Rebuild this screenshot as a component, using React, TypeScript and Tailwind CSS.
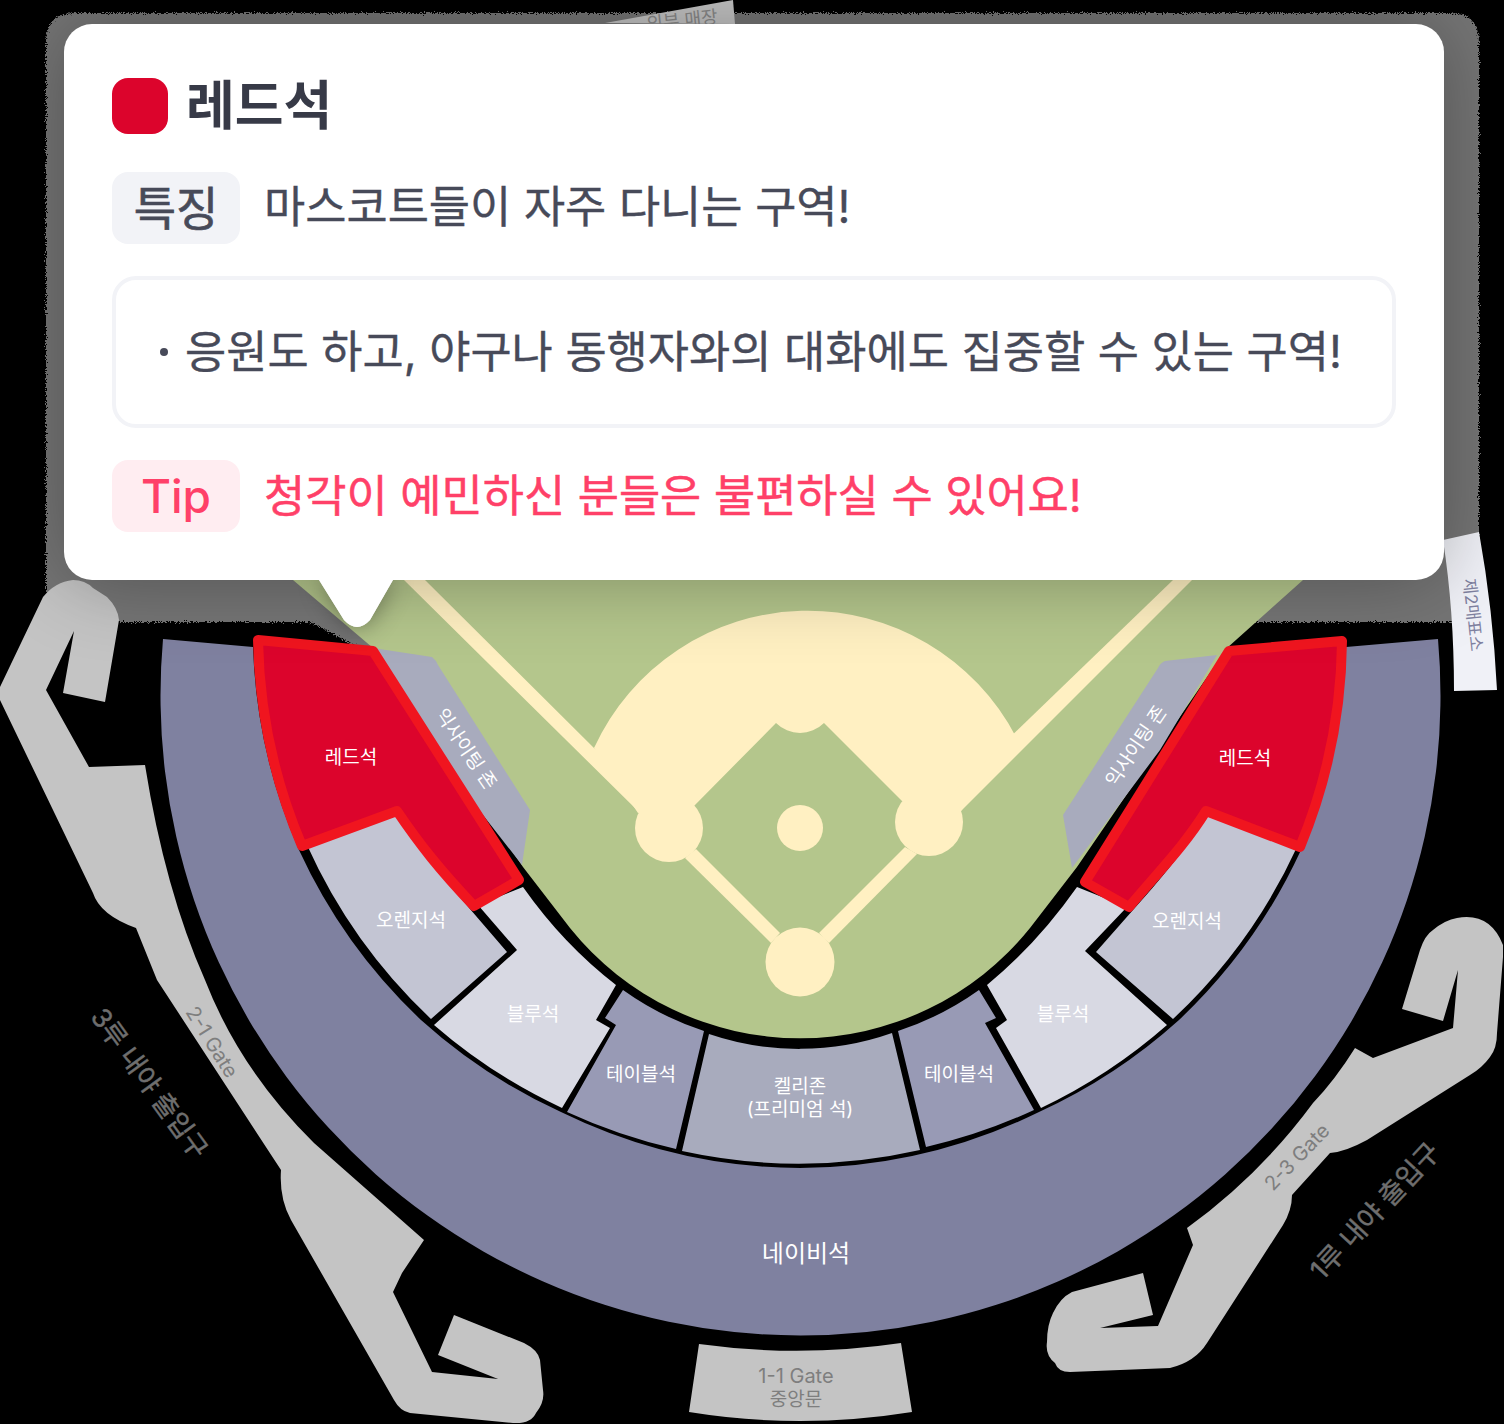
import React from 'react';

const FONT = "font-['Inter','Noto_Sans_CJK_KR',sans-serif]";

const GRAY = '#c4c4c4';
const NAVY = '#7f81a0';
const ORANGE = '#c3c5d3';
const BLUE = '#d8d9e3';
const TABLE = '#989ab5';
const ZONE = '#a8abbd';
const RED = '#dc042c';
const RED_LINE = '#f0151f';
const GRASS = '#b4c68c';
const DIRT = '#fff0c2';

const TAIL = 'M0 0L25 40Q38 54 51 40L74 0Z';

type LabelProps = {
  x: number;
  y: number;
  size: number;
  rotate?: number;
  className?: string;
  children: React.ReactNode;
};

const Label: React.FC<LabelProps> = ({ x, y, size, rotate = 0, className = 'fill-white', children }) => (
  <text
    x={x}
    y={y}
    fontSize={size}
    textAnchor="middle"
    dominantBaseline="central"
    transform={rotate ? `rotate(${rotate} ${x} ${y})` : undefined}
    className={className}
  >
    {children}
  </text>
);

const StadiumMap: React.FC = () => (
  <svg className="absolute inset-0" width={1504} height={1424} viewBox="0 0 1504 1424">
    <defs>
      <filter id="grain" x="-2%" y="-2%" width="104%" height="104%">
        <feTurbulence type="fractalNoise" baseFrequency="0.9" numOctaves="2" result="n" />
        <feDisplacementMap in="SourceGraphic" in2="n" scale="7" xChannelSelector="R" yChannelSelector="G" />
      </filter>
    </defs>

    {/* shadow of the tooltip as it flattens on the page */}
    <path
      d="M75 13H1450Q1479 13 1479 42V622H395L373 655L310 622H46V42Q46 13 75 13Z"
      fill="#747474"
      filter="url(#grain)"
    />

    {/* gates */}
    <path
      fill={GRAY}
      d="M73 580Q55 582 43 597L0 687V700L93 893Q100 915 136 928L157 980L281 1170Q279 1198 291 1220L394 1400Q400 1411 410 1413L513 1423Q531 1424 536 1413Q545 1402 543 1390L540 1360Q538 1350 524 1343L454 1315L438 1355L498 1379L432 1372L393 1292L402 1273L424 1240L314 1143Q240 1070 205 980Q165 890 145 765L89 767L46 690L74 631L63 693L105 702L119 620Q118 608 107 597L93 588Q85 580 73 580Z"
    />
    <path
      fill={GRAY}
      d="M1457 918Q1490 912 1503 945V957L1497 1033Q1497 1048 1490 1057Q1482 1068 1470 1075L1367 1140Q1345 1152 1330 1153L1292 1195Q1292 1210 1283 1225L1207 1343Q1195 1362 1170 1368L1070 1372Q1058 1372 1055 1363Q1045 1355 1047 1342Q1047 1325 1053 1313Q1060 1298 1072 1292L1143 1273L1153 1315L1100 1328L1158 1326L1193 1245L1187 1228Q1260 1175 1313 1103Q1335 1080 1355 1048L1373 1058L1453 1028L1458 970L1443 1021L1402 1009L1420 950Q1425 935 1433 930Q1445 920 1457 918Z"
    />
    <path fill={GRAY} d="M699 1344Q800 1358 901 1343L912 1412Q800 1430 689 1412Z" />
    <path fill={GRAY} d="M605 23L733 0L735 24Z" />
    <path fill="#f0f1f7" d="M1443 540L1479 532Q1493 610 1497 690L1454 691Q1454 610 1443 540Z" />

    {/* field */}
    <path
      fill={GRASS}
      d="M293 580L373 648L523 867L570 928A295 295 0 0 0 1030 928L1077 867L1227 648L1303 580Z"
    />
    <path
      fill={DIRT}
      d="M594 748A235 235 0 0 1 1016 737L961 811L902 801L824 723A34 34 0 0 1 776 723L694 806L638 813Z"
    />
    <path fill={DIRT} d="M404 580H425L594 748L660 813L640 813Z" />
    <path fill={DIRT} d="M1173 580H1192L961 811L945 800Z" />
    <path fill={DIRT} d="M685 858L771 943L780 933L696 849Z" />
    <path fill={DIRT} d="M905 847L819 933L829 943L917 854Z" />
    <circle cx={669} cy={828} r={34} fill={DIRT} />
    <circle cx={929} cy={822} r={34} fill={DIRT} />
    <circle cx={800} cy={828} r={23} fill={DIRT} />
    <circle cx={800} cy={962} r={34.5} fill={DIRT} />

    {/* stands */}
    <path
      fill={NAVY}
      d="M163 639A640 640 0 1 0 1438 639L1346 647A550 550 0 0 1 1301 850A550 550 0 0 1 1179 1020A550 550 0 0 1 1039 1112A550 550 0 0 1 800 1168A550 550 0 0 1 561 1112A550 550 0 0 1 421 1020A550 550 0 0 1 299 850A550 550 0 0 1 253 647Z"
    />
    <path fill={ZONE} d="M373 648L432 657Q436 660 438 665L530 810L522 865L440 760Z" />
    <path fill={ZONE} d="M1217 655L1165 661Q1160 663 1158 668L1063 815L1072 868L1160 750Z" />

    <path fill={ORANGE} d="M307 845L396 815C420 850 445 880 470 909L507 952L431 1019A548 548 0 0 1 307 845Z" />
    <path fill={ORANGE} d="M1297 847L1207 816C1185 850 1160 880 1133 910L1096 952L1173 1019A548 548 0 0 0 1297 847Z" />
    <path fill={BLUE} d="M478 905L523 887Q563 944 616 985L596 1020L610 1028L562 1108A548 548 0 0 1 434 1025L517 950Z" />
    <path fill={BLUE} d="M1127 907L1077 887Q1037 944 987 985L1007 1020L996 1028L1041 1108A548 548 0 0 0 1167 1025L1085 951Z" />
    <path fill={TABLE} d="M623 990A300 300 0 0 0 704 1031L676 1149A548 548 0 0 1 567 1112L616 1025L605 1018Z" />
    <path fill={TABLE} d="M979 990A300 300 0 0 1 898 1031L926 1147A548 548 0 0 0 1034 1110L985 1023L996 1018Z" />
    <path fill={ZONE} d="M709 1034A280 280 0 0 0 892 1033L920 1150A548 548 0 0 1 682 1151Z" />

    {/* selected */}
    <path
      fill={RED}
      stroke={RED_LINE}
      strokeWidth={10}
      strokeLinejoin="round"
      d="M258 640L373 651L519 880L474 906C440 870 420 845 397 811L302 846A552 552 0 0 1 258 640Z"
    />
    <path
      fill={RED}
      stroke={RED_LINE}
      strokeWidth={10}
      strokeLinejoin="round"
      d="M1229 651L1342 641A552 552 0 0 1 1300 847L1206 811C1185 845 1160 870 1129 907L1085 882Z"
    />

    {/* labels */}
    <Label x={351} y={757} size={19}>레드석</Label>
    <Label x={1245} y={758} size={19}>레드석</Label>
    <Label x={411} y={920} size={19}>오렌지석</Label>
    <Label x={1187} y={921} size={19}>오렌지석</Label>
    <Label x={533} y={1014} size={19}>블루석</Label>
    <Label x={1063} y={1014} size={19}>블루석</Label>
    <Label x={641} y={1074} size={19}>테이블석</Label>
    <Label x={959} y={1074} size={19}>테이블석</Label>
    <Label x={800} y={1086} size={19}>켈리존</Label>
    <Label x={800} y={1109} size={19}>(프리미엄 석)</Label>
    <Label x={806} y={1253} size={24}>네이비석</Label>
    <Label x={466} y={749} size={19} rotate={56}>익사이팅 존</Label>
    <Label x={1136} y={746} size={19} rotate={-56}>익사이팅 존</Label>
    <Label x={150} y={1083} size={26.5} rotate={54} className="fill-[#6e6e6e] stroke-[#6e6e6e] stroke-[0.5px]">3루 내야 출입구</Label>
    <Label x={212} y={1042} size={20} rotate={58} className="fill-[#7e7e7e]">2-1 Gate</Label>
    <Label x={1297} y={1157} size={20} rotate={-46} className="fill-[#7e7e7e]">2-3 Gate</Label>
    <Label x={1375} y={1211} size={27} rotate={-47} className="fill-[#6e6e6e] stroke-[#6e6e6e] stroke-[0.5px]">1루 내야 출입구</Label>
    <Label x={796} y={1376} size={20} className="fill-[#7e7e7e]">1-1 Gate</Label>
    <Label x={796} y={1399} size={19} className="fill-[#7e7e7e]">중앙문</Label>
    <Label x={682} y={20} size={18} rotate={-6} className="fill-[#8a8a8a]">외부 매장</Label>
    <Label x={1473} y={615} size={17} rotate={84} className="fill-[#7f81a0]">제2매표소</Label>
  </svg>
);

const Badge: React.FC<{ className: string; children: React.ReactNode }> = ({ className, children }) => (
  <span className={`flex h-[72px] w-32 items-center justify-center rounded-2xl ${className}`}>{children}</span>
);

const App: React.FC = () => {
  return (
    <div className={`relative h-[1424px] w-[1504px] overflow-hidden bg-black ${FONT}`}>
      <StadiumMap />

      <div className="relative pl-16 pt-6">
        <div className="relative w-[1380px]">
          {/* Tail shadow sits under the card, the white tail on top of the card's own shadow */}
          <svg
            className="absolute left-[255px] top-[556px] drop-shadow-[0_0_12px_rgba(0,0,0,0.4)]"
            width={74}
            height={48}
            viewBox="0 0 74 48"
          >
            <path d={TAIL} fill="#fff" />
          </svg>

          <section className="relative flex flex-col gap-8 rounded-[28px] bg-white p-12 shadow-[0_0_80px_rgba(0,0,0,0.3)]">
            {/* Title */}
            <div className="flex h-[68px] items-center gap-[18px]">
              <span className="h-14 w-14 rounded-2xl bg-[#dc042c]" />
              <h2 className="text-[53px] font-bold leading-none text-[#373a47]">레드석</h2>
            </div>

            <div className="flex items-center gap-6">
              <Badge className="bg-[#f2f3f7] text-[46px] text-[#474a59] [-webkit-text-stroke:0.7px]">특징</Badge>
              <p className="text-[44.8px] text-[#474a59] [-webkit-text-stroke:0.35px]">마스코트들이 자주 다니는 구역!</p>
            </div>

            <div className="flex h-[152px] items-center gap-[17px] rounded-3xl border-4 border-[#f2f3f7] pl-[44px]">
              <span className="h-2 w-2 rounded-full bg-[#474a59]" />
              <p className="pt-[2px] text-[44.8px] text-[#474a59] [-webkit-text-stroke:0.35px]">응원도 하고, 야구나 동행자와의 대화에도 집중할 수 있는 구역!</p>
            </div>

            <div className="flex items-center gap-6">
              <Badge className="bg-[#ffedf1] text-[46px] font-medium text-[#ff4068]">Tip</Badge>
              <p className="pt-[2px] text-[44.8px] text-[#ff4068] [-webkit-text-stroke:0.5px]">청각이 예민하신 분들은 불편하실 수 있어요!</p>
            </div>
          </section>

          <svg className="absolute left-[255px] top-[556px]" width={74} height={48} viewBox="0 0 74 48">
            <path d={TAIL} fill="#fff" />
          </svg>
        </div>
      </div>
    </div>
  );
};

export default App;
